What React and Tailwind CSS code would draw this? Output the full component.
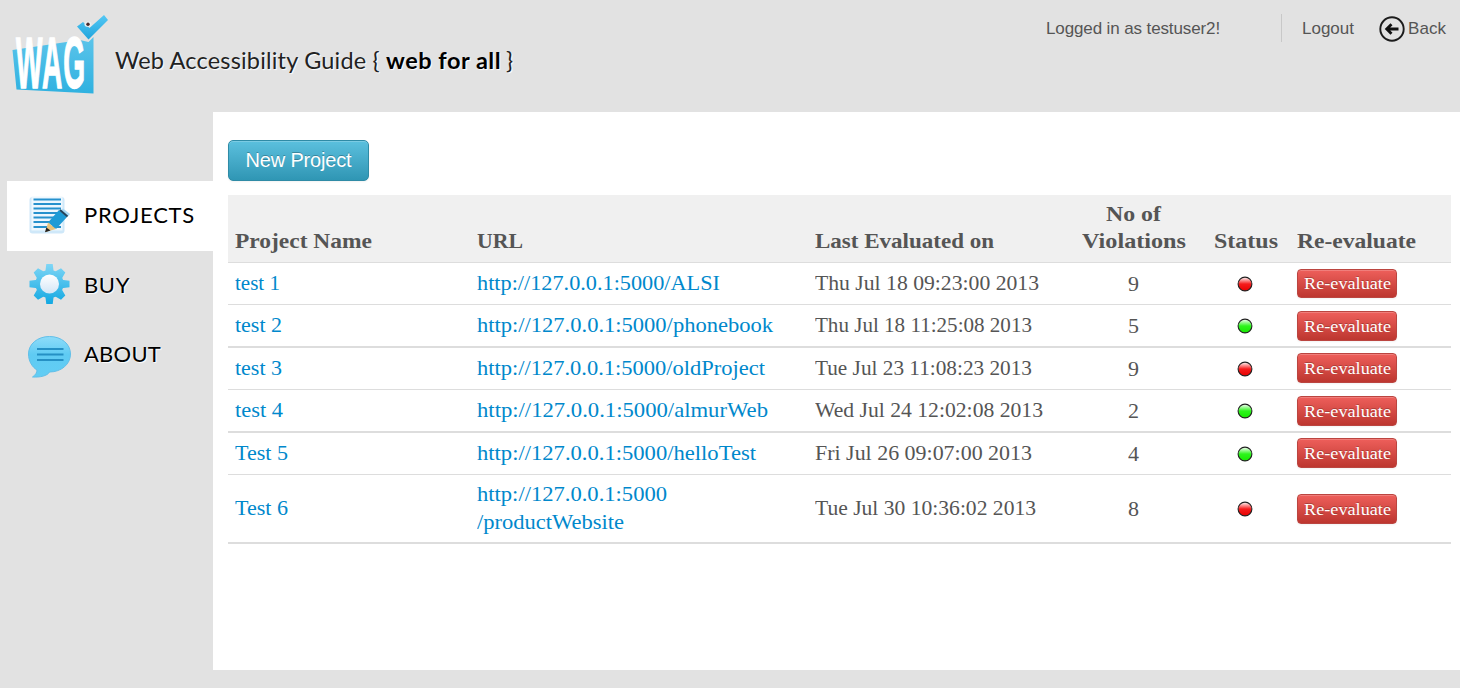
import { useLayoutEffect, useRef } from "react";

// Spreads a line of text over a given width by adjusting its letter spacing.
function Fit({ w, className = "", children }) {
  const ref = useRef(null);
  useLayoutEffect(() => {
    const el = ref.current;
    el.style.letterSpacing = "0px";
    const n = el.textContent.length;
    const gap = (w - el.getBoundingClientRect().width) / n;
    el.style.letterSpacing = gap.toFixed(3) + "px";
  }, [w]);
  return (
    <span ref={ref} className={"inline-block whitespace-pre " + className}>
      {children}
    </span>
  );
}

// Widens the letters of a line of text so that it fills a given width.
function Wide({ w, children }) {
  const ref = useRef(null);
  useLayoutEffect(() => {
    const el = ref.current;
    el.style.transform = "none";
    el.style.transform = "scaleX(" + (w / el.getBoundingClientRect().width).toFixed(4) + ")";
  }, [w]);
  return (
    <span className="inline-flex justify-start" style={{ width: w }}>
      <span ref={ref} className="inline-block shrink-0 origin-left whitespace-pre">
        {children}
      </span>
    </span>
  );
}

function Logo() {
  return (
    <svg width="98" height="82" viewBox="10 14 98 82" className="block overflow-visible">
      <defs>
        <linearGradient id="box" x1="0" y1="0" x2="0" y2="1">
          <stop offset="0" stopColor="#5cc4ea" />
          <stop offset="1" stopColor="#2fb1e0" />
        </linearGradient>
        <linearGradient id="tick" x1="0" y1="0" x2="0" y2="1">
          <stop offset="0" stopColor="#54c8f5" />
          <stop offset="1" stopColor="#1fa4dc" />
        </linearGradient>
      </defs>
      <path d="M12.500 50 L80 40 L88.500 42 L93.500 37 L93.500 93.500 L16.500 89.500 Z" fill="url(#box)" />
      <path d="M77 26.500 L83 22 L89.500 28 L104 15 L108 20 L88.500 39.500 Z" fill="url(#tick)" />
      <ellipse cx="88" cy="24.200" rx="3.500" ry="2.600" fill="#e8eef0" />
      <circle cx="88" cy="24.200" r="1.700" fill="#4a2a2a" />
      <text transform="translate(16 87.500) scale(0.385 1)" fontFamily="Liberation Sans" fontWeight="700" fontSize="73" letterSpacing="2.500" fill="#fff" stroke="#fff" strokeWidth="1.500">WAG</text>
    </svg>
  );
}

function ProjectsIcon() {
  return (
    <svg width="44" height="44" viewBox="27 193 44 44" className="block">
      <rect x="29.500" y="196" width="35" height="36.500" rx="3" fill="#cfe8f9" />
      <rect x="31.500" y="195.500" width="31" height="34" fill="#edf7fe" />
      <path d="M33.500 198.500h27.500M33.500 203h27.500M33.500 207.500h27.500M33.500 212h27M33.500 216.500h23M33.500 221h18M33.500 226h27.500" stroke="#2691cd" strokeWidth="2.200" />
      <path d="M63 207.500 L70 213 L67.500 216 L60 210 Z" fill="#a9d9f5" />
      <path d="M59 209 L67 216 L56 228 L48 221.500 Z" fill="#1e9bd6" />
      <path d="M60 209 L67.500 215.500" stroke="#23435a" strokeWidth="2" />
      <path d="M48 221.500 L56 228 L45.500 231 Z" fill="#e9c37c" />
      <path d="M46.300 226.500 L50.500 229.500 L45 231.200 Z" fill="#222" />
    </svg>
  );
}

function GearIcon() {
  return (
    <svg width="44" height="44" viewBox="-22.500 -22 44 44" className="-mt-[4px] block">
      <defs>
        <linearGradient id="gear" x1="0" y1="-20" x2="0" y2="20" gradientUnits="userSpaceOnUse">
          <stop offset="0" stopColor="#7fd6f6" />
          <stop offset="1" stopColor="#12a8e2" />
        </linearGradient>
        <linearGradient id="hub" x1="0" y1="0" x2="0" y2="1">
          <stop offset="0" stopColor="#fff" />
          <stop offset="1" stopColor="#d3e6f6" />
        </linearGradient>
      </defs>
      <g fill="url(#gear)">
        <circle r="14" />
        <path d="M-3.200-20h6.400l1 8h-8.400zM-3.200 20h6.400l1-8h-8.400zM-20-3.200v6.400l8 1v-8.400zM20-3.200v6.400l-8 1v-8.400z" />
        <path d="M-15.800-11.500l4.300-4.300 7 4-7.300 7.300zM15.800-11.500l-4.300-4.300-7 4 7.300 7.300zM-15.800 11.500l4.300 4.300 7-4-7.300-7.300zM15.800 11.500l-4.300 4.300-7-4 7.300-7.300z" />
      </g>
      <circle r="9.500" fill="url(#hub)" />
    </svg>
  );
}

function ChatIcon() {
  return (
    <svg width="44" height="44" viewBox="27 334 44 44" className="block">
      <defs>
        <linearGradient id="chat" x1="0" y1="0" x2="0" y2="1">
          <stop offset="0" stopColor="#8edcf9" />
          <stop offset="0.450" stopColor="#5fcbf3" />
          <stop offset="1" stopColor="#62cdf4" />
        </linearGradient>
      </defs>
      <path d="M49.500 336.500c12 0 21 7.500 21 17.500s-9 18-21 18c-2 4-10 5.500-17 5 3-2 4.500-4.500 4.500-7-5-3-8.500-9-8.500-16 0-10 9-17.500 21-17.500z" fill="url(#chat)" stroke="#62bfe8" strokeWidth="1" />
      <path d="M37 349h26.500M37 354.500h26.500M37 360h26.500" stroke="#2590c4" strokeWidth="2" />
    </svg>
  );
}

function BackIcon() {
  return (
    <svg width="26" height="26" viewBox="0 0 26 26" className="block">
      <circle cx="13" cy="13" r="11.700" fill="none" stroke="#1c1c1c" strokeWidth="1.900" />
      <path d="M19.500 13H8.500M12.500 8.200L7.700 13l4.800 4.800" fill="none" stroke="#111" strokeWidth="2.800" />
    </svg>
  );
}

function Light({ ok }) {
  const id = ok ? "lightOk" : "lightBad";
  return (
    <svg width="16" height="16" viewBox="0 0 16 16" className="block">
      <defs>
        <linearGradient id={id} x1="0" y1="0" x2="0" y2="1">
          <stop offset="0" stopColor="#fff" />
          <stop offset="0.500" stopColor={ok ? "#2df51c" : "#f51c1c"} />
          <stop offset="1" stopColor={ok ? "#17e800" : "#e60000"} />
        </linearGradient>
      </defs>
      <circle cx="8" cy="8" r="6.900" fill={"url(#" + id + ")"} stroke="#222" strokeWidth="1.100" />
    </svg>
  );
}

const rows = [
  { name: "test 1", nw: 45, url: [["http://127.0.0.1:5000/ALSI", 243]], date: "Thu Jul 18 09:23:00 2013", dw: 224, count: 9, ok: false, h: "h-[42px] border-b", btn: "-mt-px h-[29px]" },
  { name: "test 2", nw: 47, url: [["http://127.0.0.1:5000/phonebook", 296]], date: "Thu Jul 18 11:25:08 2013", dw: 217, count: 5, ok: true, h: "h-[43px] border-b-2", btn: "mt-px h-[30px]" },
  { name: "test 3", nw: 47, url: [["http://127.0.0.1:5000/oldProject", 288]], date: "Tue Jul 23 11:08:23 2013", dw: 217, count: 9, ok: false, h: "h-[42px] border-b", btn: "-mt-px h-[30px]" },
  { name: "test 4", nw: 48, url: [["http://127.0.0.1:5000/almurWeb", 291]], date: "Wed Jul 24 12:02:08 2013", dw: 228, count: 2, ok: true, h: "h-[43px] border-b-2", btn: "mt-px h-[30px]" },
  { name: "Test 5", nw: 53, url: [["http://127.0.0.1:5000/helloTest", 279]], date: "Fri Jul 26 09:07:00 2013", dw: 217, count: 4, ok: true, h: "h-[42px] border-b", btn: "-mt-px h-[30px]" },
  { name: "Test 6", nw: 53, url: [["http://127.0.0.1:5000", 190], ["/productWebsite", 147]], date: "Tue Jul 30 10:36:02 2013", dw: 221, count: 8, ok: false, h: "h-[69px] border-b-2", btn: "mt-px h-[30px]" },
];

const cols = "grid grid-cols-[242px_338px_258px_134px_90px_161px]";

function NavItem({ icon, label, w, active, lift = "pb-[2px]" }) {
  return (
    <a className={"flex h-[70px] items-center pl-5 " + (active ? "bg-white" : "")}>
      {icon}
      <span className={"ml-[13px] flex " + lift}>
        <Fit w={w} className="font-['Lato','Open_Sans',sans-serif] text-[22px] leading-none text-black [text-shadow:1px_1px_1px_#fff]">
          {label}
        </Fit>
      </span>
    </a>
  );
}

export default function App() {
  return (
    <div className="flex h-[688px] w-[1460px] flex-col overflow-hidden bg-[#e2e2e2] font-['Liberation_Serif',serif] text-[21px] text-[#555]">
      <header className="flex h-28 shrink-0 items-start justify-between">
        <div className="flex pl-[10px] pt-[14px]">
          <Logo />
          <div className="ml-[7px] mt-[32px] flex font-['Lato','Open_Sans',sans-serif] text-[23.500px] leading-7 text-[#222] [text-shadow:1px_1px_1px_#fff]">
            <Fit w={271}>{"Web Accessibility Guide { "}</Fit>
            <Fit w={115} className="font-bold text-black">web for all</Fit>
            <Fit w={14} className="ml-[5px]">{"}"}</Fit>
          </div>
        </div>
        <div className="flex items-start pr-[14px] pt-[14px] font-['Liberation_Sans',sans-serif] text-[17px] leading-7">
          <Fit w={174} className="pt-px">Logged in as testuser2!</Fit>
          <div className="ml-[61px] h-7 w-px bg-[#c8c8c8]" />
          <Fit w={52} className="ml-5 pt-px">Logout</Fit>
          <span className="ml-[25px] pt-[2px]"><BackIcon /></span>
          <Fit w={38} className="ml-[3px] pt-px">Back</Fit>
        </div>
      </header>
      <div className="flex h-[558px] shrink-0">
        <nav className="w-[213px] pl-[7px] pt-[69px]">
          <NavItem icon={<ProjectsIcon />} label="PROJECTS" w={111} active />
          <NavItem icon={<GearIcon />} label="BUY" w={46} />
          <NavItem icon={<ChatIcon />} label="ABOUT" w={77} lift="pb-[4px]" />
        </nav>
        <main className="w-[1247px] bg-white pl-[15px] pt-7">
          <button className="flex h-[41px] w-[141px] items-center justify-center rounded-[5px] border border-[#2f8ba6] bg-linear-to-b from-[#5bc0de] to-[#2f96b4] pb-[2px] font-['Liberation_Sans',sans-serif] text-[20px] text-white shadow-[inset_0_1px_0_rgba(255,255,255,.2),0_1px_2px_rgba(0,0,0,.05)] [text-shadow:0_-1px_0_rgba(0,0,0,.25)]">
            <Fit w={106}>New Project</Fit>
          </button>
          <div className="mt-[14px] w-[1223px]">
            <div className={cols + " h-[68px] items-end border-b border-[#ddd] bg-[#f0f0f0] pb-[7px] text-[21px] font-bold leading-[27px]"}>
              <div className="flex pl-[7px]"><Wide w={137}>Project Name</Wide></div>
              <div className="flex pl-[7px]"><Wide w={46}>URL</Wide></div>
              <div className="flex pl-[7px]"><Wide w={179}>Last Evaluated on</Wide></div>
              <div className="flex flex-col items-center pl-px"><Wide w={55}>No of</Wide><Wide w={104}>Violations</Wide></div>
              <div className="flex justify-center pl-px"><Wide w={64}>Status</Wide></div>
              <div className="flex pl-[7px]"><Wide w={119}>Re-evaluate</Wide></div>
            </div>
            {rows.map((r) => (
              <div key={r.name} className={cols + " items-center border-[#ddd] leading-7 " + r.h}>
                <div className="flex pb-px pl-[7px] text-[#0088cc]"><Wide w={r.nw}>{r.name}</Wide></div>
                <div className="flex flex-col items-start pb-px pl-[7px] text-[#0088cc]">
                  {r.url.map(([t, w]) => <Wide key={t} w={w}>{t}</Wide>)}
                </div>
                <div className="flex pb-px pl-[7px]"><Wide w={r.dw}>{r.date}</Wide></div>
                <div className="flex justify-center pl-px"><Wide w={11}>{r.count}</Wide></div>
                <div className="flex justify-center"><Light ok={r.ok} /></div>
                <div className="pl-[7px]">
                  <button className={"flex w-[100px] items-center justify-center rounded-[4px] border border-[#bb4540] bg-linear-to-b from-[#ee5f5b] to-[#bd362f] text-[17.500px] text-white shadow-[inset_0_1px_0_rgba(255,255,255,.2),0_1px_2px_rgba(0,0,0,.05)] [text-shadow:0_-1px_0_rgba(0,0,0,.25)] " + r.btn}>
                    <Wide w={87}>Re-evaluate</Wide>
                  </button>
                </div>
              </div>
            ))}
          </div>
        </main>
      </div>
    </div>
  );
}
